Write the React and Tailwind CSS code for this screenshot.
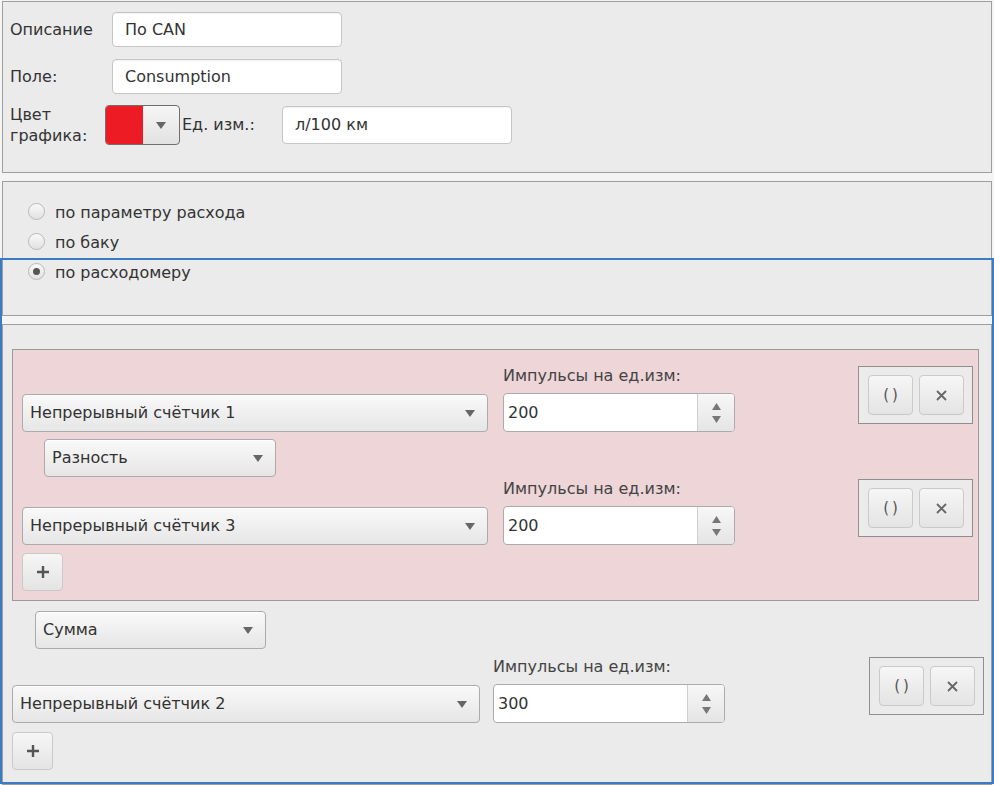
import React from 'react';

// small triangle used by combo boxes and spinners
const Arrow = ({ up = false, w = 10, h = 7, color = '#666' }) => (
  <svg width={w} height={h} viewBox={`0 0 ${w} ${h}`}>
    <path d={up ? `M0 ${h}H${w}L${w / 2} 0Z` : `M0 0H${w}L${w / 2} ${h}Z`} fill={color} />
  </svg>
);

const TextInput = ({ value, className = '' }) => (
  <div
    className={`flex items-center rounded-[4px] border border-[#c6c6c6] bg-white pl-[12px] text-[#333] shadow-[inset_0_1px_1px_rgba(0,0,0,0.06)] ${className}`}
  >
    {value}
  </div>
);

const Select = ({ value, className = '' }) => (
  <div
    className={`flex h-[38px] items-center justify-between rounded-[4px] border border-[#ababab] bg-linear-to-b from-[#f9f9f9] to-[#e6e6e6] pl-[7px] pr-[12px] text-[#333] shadow-[inset_0_1px_0_#fff] ${className}`}
  >
    <span>{value}</span>
    <Arrow />
  </div>
);

const Spinner = ({ value }) => (
  <div className="flex h-[39px] w-[232px] overflow-hidden rounded-[4px] border border-[#ababab] bg-white">
    <div className="flex flex-1 items-center pl-[4px] text-[#333]">{value}</div>
    <div className="flex w-[37px] flex-col items-center justify-center gap-[6px] border-l border-[#cfcfcf] bg-linear-to-b from-[#f7f7f7] to-[#e5e5e5]">
      <Arrow up w={9} h={7} color="#777" />
      <Arrow w={9} h={7} color="#777" />
    </div>
  </div>
);

const ToolButton = ({ children }) => (
  <div className="flex h-[40px] w-[45px] items-center justify-center rounded-[4px] border border-[#cacaca] bg-linear-to-b from-[#f6f6f6] to-[#e4e4e4] text-[#555]">
    {children}
  </div>
);

const ButtonBox = ({ className = '' }) => (
  <div className={`flex gap-[6px] border border-[#8f8f8f] bg-[#ebebeb] p-[8px] pl-[9px] ${className}`}>
    <ToolButton>
      <span className="text-[15px] tracking-[3px] pl-[3px]">()</span>
    </ToolButton>
    <ToolButton>
      <svg width="11" height="11" viewBox="0 0 11 11">
        <path d="M1 1L10 10M10 1L1 10" stroke="#666" strokeWidth="1.8" />
      </svg>
    </ToolButton>
  </div>
);

const PlusButton = ({ className = '' }) => (
  <div
    className={`flex h-[38px] w-[41px] items-center justify-center rounded-[4px] border border-[#cacaca] bg-linear-to-b from-[#f6f6f6] to-[#e4e4e4] ${className}`}
  >
    <svg width="14" height="14" viewBox="0 0 14 14">
      <path d="M7 1V13M1 7H13" stroke="#555" strokeWidth="2.4" />
    </svg>
  </div>
);

const CounterRow = ({ name, value, selectW, gap, boxClass, className = '' }) => (
  <div className={`flex items-start ${className}`}>
    <div className={`flex items-end ${gap}`}>
      <Select value={name} className={selectW} />
      <div className="flex flex-col">
        <span className="mb-[7px] h-[20px] leading-[20px] text-[#444]">Импульсы на ед.изм:</span>
        <Spinner value={value} />
      </div>
    </div>
    <ButtonBox className={boxClass} />
  </div>
);

const Radio = ({ label, checked }) => (
  <div className="flex h-[30px] items-center gap-[10px]">
    <div className="-mt-[4px] flex h-[17px] w-[17px] items-center justify-center rounded-full border border-[#b9b9b9] bg-linear-to-b from-[#f9f9f9] to-[#e2e2e2]">
      {checked && <div className="h-[7px] w-[7px] rounded-full bg-[#555]" />}
    </div>
    <span className="text-[#333]">{label}</span>
  </div>
);

export default function App() {
  return (
    <div className="relative h-[785px] w-[994px] overflow-hidden bg-[#f4f4f4] font-['DejaVu_Sans',sans-serif] text-[16px] leading-[20px]">
      {/* Main parameters */}
      <div className="mx-[2px] mt-[1px] h-[172px] border border-[#9e9e9e] bg-[#ebebeb] px-[7px] pt-[10px]">
        <div className="flex items-center">
          <span className="w-[102px] text-[#333]">Описание</span>
          <TextInput value="По CAN" className="h-[35px] w-[230px]" />
        </div>
        <div className="mt-[12px] flex items-center">
          <span className="w-[102px] text-[#333]">Поле:</span>
          <TextInput value="Consumption" className="h-[35px] w-[230px]" />
        </div>
        <div className="mt-[10px] flex items-center">
          <span className="w-[95px] leading-[21px] text-[#333]">
            Цвет
            <br />
            графика:
          </span>
          <div className="flex h-[40px] w-[75px] overflow-hidden rounded-[4px] border border-[#6f6f6f] bg-linear-to-b from-[#f6f6f6] to-[#e2e2e2]">
            <div className="w-[37px] bg-[#ed1c24]" />
            <div className="flex flex-1 items-center justify-center">
              <Arrow />
            </div>
          </div>
          <span className="ml-[2px] w-[100px] text-[#333]">Ед. изм.:</span>
          <TextInput value="л/100 км" className="h-[38px] w-[230px]" />
        </div>
      </div>

      {/* Consumption source */}
      <div className="mx-[2px] mt-[8px] h-[135px] border border-[#9e9e9e] bg-[#ebebeb] pl-[25px] pt-[16px]">
        <Radio label="по параметру расхода" />
        <Radio label="по баку" />
        <Radio label="по расходомеру" checked />
      </div>

      {/* Flow meter formula */}
      <div className="mx-[2px] mt-[8px] h-[461px] border border-[#9e9e9e] bg-[#ebebeb] px-[9px] pt-[24px]">
        <div className="w-[967px] border border-[#9a9a9a] bg-[#edd5d8] px-[9px] pb-[9px] pt-[16px]">
          <CounterRow
            name="Непрерывный счётчик 1"
            value="200"
            selectW="w-[466px]"
            gap="gap-[15px]"
            boxClass="ml-auto mr-[-4px]"
          />
          <Select value="Разность" className="ml-[22px] mt-[7px] w-[232px]" />
          <CounterRow
            name="Непрерывный счётчик 3"
            value="200"
            selectW="w-[466px]"
            gap="gap-[15px]"
            boxClass="ml-auto mr-[-4px]"
            className="mt-[2px]"
          />
          <PlusButton className="mt-[8px]" />
        </div>
        <Select value="Сумма" className="ml-[23px] mt-[10px] w-[231px]" />
        <CounterRow
          name="Непрерывный счётчик 2"
          value="300"
          selectW="w-[468px]"
          gap="gap-[13px]"
          boxClass="ml-auto mr-[-2px]"
          className="mt-[8px]"
        />
        <PlusButton className="mt-[9px]" />
      </div>

      {/* focus frame drawn over the lower panels */}
      <div className="pointer-events-none absolute left-0 top-[258px] h-[526px] w-[994px] border-2 border-[#3b7bc4]" />
    </div>
  );
}
